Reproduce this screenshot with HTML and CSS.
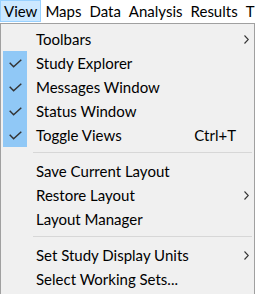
FILE: index.html
```html
<!DOCTYPE html>
<html lang="en">
<head>
  <meta charset="UTF-8" />
  <title>View Menu</title>
  <link rel="stylesheet" href="styles.css">
</head>
<body>
  <!-- Top menu bar -->
  <div class="menubar">
    <span class="bar-item open">View</span>
    <span class="bar-item">Maps</span>
    <span class="bar-item">Data</span>
    <span class="bar-item">Analysis</span>
    <span class="bar-item">Results</span>
    <span class="bar-item">T</span>
  </div>

  <!-- Drop-down for View -->
  <div class="menu">
    <div class="row">
      <span class="check"></span>
      <span class="label">Toolbars</span>
      <span class="arrow"><svg width="5" height="9" viewBox="0 0 5 9"><polyline points="0.5,0.5 4.3,4.5 0.5,8.5" fill="none" stroke="#333" stroke-width="1.1"/></svg></span>
    </div>
    <div class="row">
      <span class="check on"><svg width="13" height="9" viewBox="0 0 13 9"><polyline points="0.7,3.8 4.6,7.7 12.3,0.7" fill="none" stroke="#333" stroke-width="1.5"/></svg></span>
      <span class="label">Study Explorer</span>
      <span class="arrow"></span>
    </div>
    <div class="row">
      <span class="check on"><svg width="13" height="9" viewBox="0 0 13 9"><polyline points="0.7,3.8 4.6,7.7 12.3,0.7" fill="none" stroke="#333" stroke-width="1.5"/></svg></span>
      <span class="label">Messages Window</span>
      <span class="arrow"></span>
    </div>
    <div class="row">
      <span class="check on"><svg width="13" height="9" viewBox="0 0 13 9"><polyline points="0.7,3.8 4.6,7.7 12.3,0.7" fill="none" stroke="#333" stroke-width="1.5"/></svg></span>
      <span class="label">Status Window</span>
      <span class="arrow"></span>
    </div>
    <div class="row">
      <span class="check on"><svg width="13" height="9" viewBox="0 0 13 9"><polyline points="0.7,3.8 4.6,7.7 12.3,0.7" fill="none" stroke="#333" stroke-width="1.5"/></svg></span>
      <span class="label">Toggle Views</span>
      <span class="shortcut">Ctrl+T</span>
      <span class="arrow"></span>
    </div>
    <div class="sep"></div>
    <div class="row">
      <span class="check"></span>
      <span class="label">Save Current Layout</span>
      <span class="arrow"></span>
    </div>
    <div class="row">
      <span class="check"></span>
      <span class="label">Restore Layout</span>
      <span class="arrow"><svg width="5" height="9" viewBox="0 0 5 9"><polyline points="0.5,0.5 4.3,4.5 0.5,8.5" fill="none" stroke="#333" stroke-width="1.1"/></svg></span>
    </div>
    <div class="row">
      <span class="check"></span>
      <span class="label">Layout Manager</span>
      <span class="arrow"></span>
    </div>
    <div class="sep"></div>
    <div class="row">
      <span class="check"></span>
      <span class="label">Set Study Display Units</span>
      <span class="arrow"><svg width="5" height="9" viewBox="0 0 5 9"><polyline points="0.5,0.5 4.3,4.5 0.5,8.5" fill="none" stroke="#333" stroke-width="1.1"/></svg></span>
    </div>
    <div class="row">
      <span class="check"></span>
      <span class="label">Select Working Sets...</span>
      <span class="arrow"></span>
    </div>
  </div>
</body>
</html>
```

FILE: styles.css
```css
body {
  margin: 0;
  background: #fff;
  font-family: Lato, "Liberation Sans", sans-serif;
  font-size: 15px;
  color: #000;
  overflow: hidden;
}
.menubar {
  display: flex;
  height: 23px;
  background: #fff;
  white-space: nowrap;
  overflow: hidden;
}
.bar-item {
  padding: 0 3px 0 2px;
  height: 22px;
  line-height: 20px;
  margin-right: 1px;
  border: 1px solid transparent;
  box-sizing: border-box;
  flex: none;
}
.bar-item.open {
  padding-left: 3px;
  background: #cce8ff;
  border-color: #99d1ff;
}
.menu {
  width: 255px;
  box-sizing: border-box;
  background: #f0f0f0;
  border: 1px solid #a0a0a0;
  padding: 3px 2px;
}
.row {
  display: flex;
  align-items: center;
  height: 24px;
  white-space: nowrap;
}
.check {
  width: 24px;
  height: 24px;
  flex: none;
  display: flex;
  align-items: center;
  justify-content: center;
}
.check.on {
  background: #90c8f6;
}
.label {
  flex: 1;
  padding-left: 9px;
}
.shortcut {
  padding-right: 8px;
}
.arrow {
  width: 8px;
  flex: none;
  display: flex;
  align-items: center;
}
.sep {
  height: 1px;
  background: #d7d7d7;
  margin: 5px 0 6px 30px;
}
```
